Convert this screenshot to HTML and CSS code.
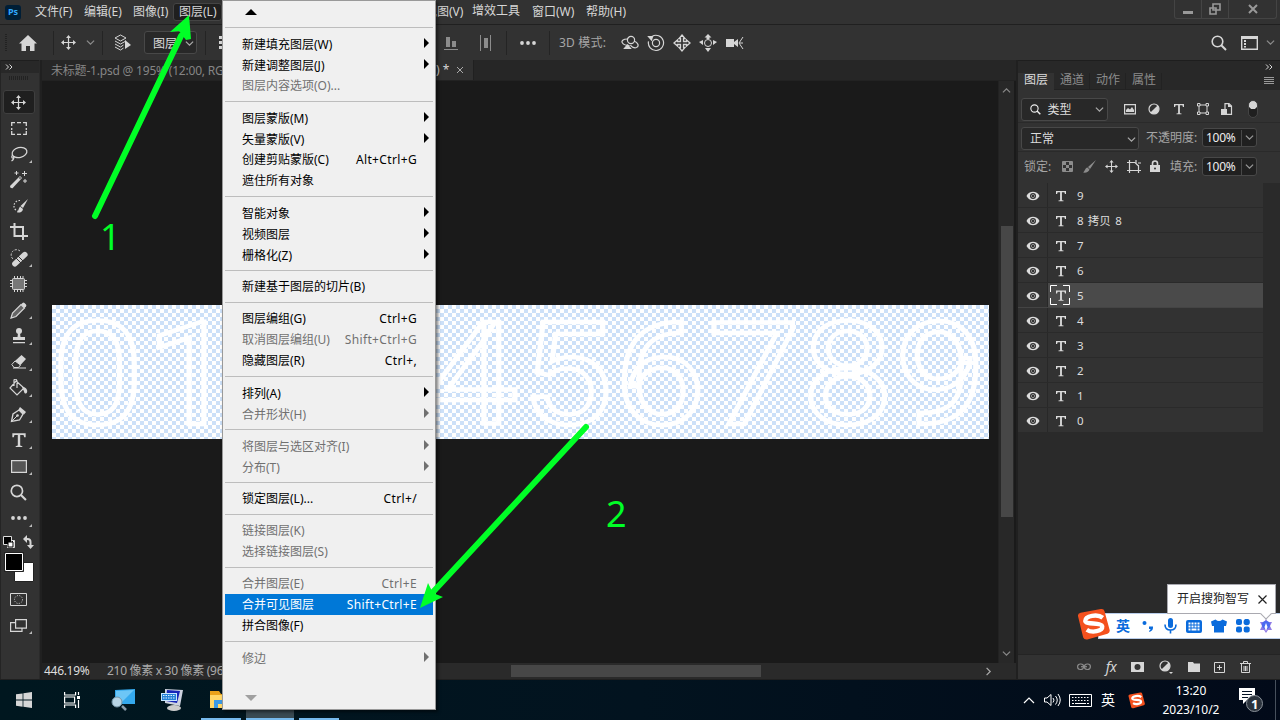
FILE: index.html
```html
<!DOCTYPE html>
<html lang="zh-CN">
	<head>
		<meta charset="UTF-8">
		<title>Photoshop</title>
		<link rel="stylesheet" href="styles.css">
	</head>
	<body>
		<svg class="defs" width="0" height="0">
			<symbol id="move" viewBox="0 0 16 16"><path d="M8 2v12M2 8h12" fill="none" stroke="currentColor" stroke-width="1.3"/><path d="M8 0l2.600 3.200H5.400zM8 16l2.600-3.200H5.400zM0 8l3.200-2.600v5.200zM16 8l-3.200-2.600v5.200z"/></symbol>
			<symbol id="down" viewBox="0 0 8 8"><path d="M.8 2.300l3.200 3.200 3.200-3.200" fill="none" stroke="currentColor" stroke-width="1.100"/></symbol>
			<symbol id="type" viewBox="0 0 12 12"><path d="M1 1h10v3H9.900L9.400 2.300H6.900v7.900l1.600.4V11.300H3.500v-.7l1.600-.4V2.300H2.600L2.100 4H1z"/></symbol>
			<symbol id="search" viewBox="0 0 16 16"><circle cx="6.500" cy="6.500" r="5.300" fill="none" stroke="currentColor" stroke-width="1.600"/><path d="M10.300 10.300L15 15" stroke="currentColor" stroke-width="2"/></symbol>
			<symbol id="eye" viewBox="0 0 14 10"><path d="M.5 5C3-.6 11-.6 13.500 5 11 10.600 3 10.600.5 5z"/><circle cx="7" cy="5" r="3" fill="#323232"/><circle cx="7" cy="5" r="1.700"/><circle cx="7" cy="5" r="1.200" fill="#323232"/></symbol>
			<symbol id="half" viewBox="0 0 12 12"><circle cx="6" cy="6" r="5" fill="none" stroke="currentColor" stroke-width="1.200"/><path d="M9.600 2.400A5.100 5.100 0 0 1 2.400 9.600z"/></symbol>
			<symbol id="more" viewBox="0 0 16 4"><circle cx="2" cy="2" r="1.900"/><circle cx="8" cy="2" r="1.900"/><circle cx="14" cy="2" r="1.900"/></symbol>
			<symbol id="sogou" viewBox="0 0 32 32"><path d="M1 8Q.500 5 3.500 4.500L23 1q3-.6 3.600 2l5 18q.7 3-2 4L10 30.500q-3 .5-4-2z" fill="#f4511e"/><path d="M25 9.500C20 5.500 8 7.500 8 12.500c.5 4 16 1 16.500 5.500.4 4.500-10 6.500-15 3" fill="none" stroke="#fff" stroke-width="4.200"/></symbol>
		</svg>

		<div class="app">
			<div class="menubar">
				<span class="logo">Ps</span>
				<span class="item">文件(F)</span>
				<span class="item">编辑(E)</span>
				<span class="item">图像(I)</span>
				<span class="item open">图层(L)</span>
				<span class="item view">视图(V)</span>
				<span class="item raised">增效工具</span>
				<span class="item">窗口(W)</span>
				<span class="item">帮助(H)</span>
				<div class="win">
					<span><svg width="12" height="14"><path d="M1 9h10v3H1z"/></svg></span>
					<span><svg width="14" height="14" fill="none" stroke="currentColor" stroke-width="1.600"><path d="M5 2h7v6H5zM2 6h6v6H2z"/></svg></span>
					<span class="close"><svg width="12" height="14" fill="none" stroke="currentColor" stroke-width="2"><path d="M2 3l8 8M10 3l-8 8"/></svg></span>
				</div>
			</div>

			<div class="options">
				<i class="grip"></i>
				<svg class="home" width="18" height="16"><path d="M9 0l9 8.500h-2.500V16h-4.500v-5H7v5H2.500V8.500H0z"/></svg>
				<i class="line"></i>
				<svg class="o-move" width="15" height="15"><use href="#move"/></svg>
				<svg class="dim" width="9" height="9"><use href="#down"/></svg>
				<i class="line"></i>
				<svg class="stack" width="18" height="18" fill="none" stroke="currentColor"><path d="M1 4l5.500-3L12 4 6.500 7zM1 7l5.500 3L12 7M1 10l5.500 3 3-2M1 13l5.500 3 3-2"/><path d="M11 6v9l6-4z" fill="currentColor" stroke="none"/></svg>
				<div class="select pick"><span>图层</span><svg width="9" height="9"><use href="#down"/></svg></div>
				<i class="line"></i>
				<svg class="dots" width="4" height="15"><path d="M1 1h3v3H1zM1 6h3v3H1zM1 11h3v3H1z"/></svg>
				<svg class="alignb" width="14" height="14"><path d="M2 1h4v10H2zM8 5h4v6H8zM0 13h14v1H0z"/></svg>
				<svg class="aligned" width="12" height="18"><path d="M0 1h1v16H0zM10 1h1v16h-1zM4 4h4v10H4z"/></svg>
				<i class="line"></i>
				<svg class="more" width="16" height="4"><use href="#more"/></svg>
				<i class="line"></i>
				<span class="mode">3D 模式:</span>
				<div class="modes">
					<svg width="18" height="16" fill="none" stroke="currentColor" stroke-width="1.200"><circle cx="10" cy="5" r="3.600"/><path d="M6.500 4C2 4 0 6 1.500 8c1 1.600 4 2.500 7 2.500M13 6c4 1.500 5.500 5 2.500 6.500-2 .8-5-.3-6-2.500"/><path d="M3.500 13.500l3-3.500 3 3.500z" fill="currentColor"/></svg>
					<svg width="18" height="18" fill="none" stroke="currentColor" stroke-width="1.200"><circle cx="9" cy="9" r="3.600"/><path d="M5 2.400a7.600 7.600 0 1 1-3.500 5"/><path d="M1.500 2.500h4l-1 3.500z" fill="currentColor"/></svg>
					<svg width="18" height="18" viewBox="-1 -1 18 18"><path d="M8 0l3 3.500H9.500v3h3V5L16 8l-3.500 3V9.500h-3v3H11L8 16l-3-3.500h1.500v-3h-3V11L0 8l3.500-3v1.500h3v-3H5z" fill="none" stroke="currentColor" stroke-width="1.300"/></svg>
					<svg width="18" height="18"><circle cx="9" cy="9" r="3.500" fill="none" stroke="currentColor"/><path d="M9 0l3.500 3.500h-2V5h-3V3.500h-2zM9 18l3-4H6zM0 8l4-2v5zM18 8l-4-2v5z"/></svg>
					<svg width="20" height="16"><path d="M1 4h8v8H1zM9 7l4-3v8l-4-3z"/><path d="M18 2l-4 6 4 6M15 8h3" fill="none" stroke="currentColor"/></svg>
				</div>
				<div class="right">
					<svg width="16" height="16"><use href="#search"/></svg>
					<svg width="17" height="14"><path d="M.7.700h15.600v12.600H.7z" fill="none" stroke="currentColor" stroke-width="1.400"/><path d="M0 0h17v3H0zM3 4h2v2H3zM3 7h2v2H3zM3 10h2v1.500H3z"/></svg>
					<svg class="dim" width="9" height="9"><use href="#down"/></svg>
				</div>
			</div>

			<div class="work">
				<div class="tools">
					<div class="strip"><svg width="8" height="6" fill="none" stroke="currentColor"><path d="M1 .5l2.500 2.500L1 5.500M4.500.5L7 3 4.500 5.500"/></svg></div>
					<div class="hgrip"></div>
					<div class="tool on"><svg width="15" height="15"><use href="#move"/></svg></div>
					<div class="tool"><svg width="16" height="13" fill="none" stroke="currentColor" stroke-width="1.300"><path d="M.7 4V.7H4M6 .7h4M12 .7h3.300V4M15.300 6v2M15.300 9v3.300H12M10 12.300H6M4 12.300H.7V9M.7 6v2"/></svg></div>
					<div class="tool sub"><svg width="18" height="17" fill="none" stroke="currentColor" stroke-width="1.300"><ellipse cx="9.500" cy="6.500" rx="7.500" ry="5" transform="rotate(-14 9.500 6.500)"/><path d="M3 9c-2 1-1.500 3.500 1 3M4 10c0 3-.5 4-2.500 5"/></svg></div>
					<div class="tool"><svg width="19" height="18"><path d="M1 15L11 5l2 2L3.500 17.200Q1 17.500 1 15z" /><path d="M10 7l1-1 1 1-1 1z" fill="#323232"/><path d="M7.500 0v4M5.500 2h4M15.500 0v5M13 2.500h5M16 8v4M14 10h4" stroke="currentColor"/></svg></div>
					<div class="tool"><svg width="20" height="17"><path d="M11 2.500a5.500 5.500 0 1 0-1 11" fill="none" stroke="currentColor" stroke-width="1.200" stroke-dasharray="1.500 1.500"/><path d="M19 1l-5 9-2.500-2zM11 8.500l3 2.500c-.5 3-3 4-6 3.500 1.500-1 1-3 3-6z"/></svg></div>
					<div class="tool"><svg width="18" height="18" fill="none" stroke="currentColor" stroke-width="2"><path d="M0 4h13v9M4.500 0v13H18M13 13v4"/></svg></div>
					<div class="tool sub"><svg width="18" height="18"><path d="M10 2a5 5 0 1 0-7 8" fill="none" stroke="currentColor" stroke-dasharray="2 1.500"/><rect x="0" y="8" width="19" height="5.500" rx="2.700" transform="rotate(-43 9 10)"/><path d="M8 7l5 5M6 9l5 5" stroke="#323232"/></svg></div>
					<div class="tool"><svg width="17" height="16"><rect x="2.500" y="2.500" width="12" height="11" rx="1" fill="#777" stroke="currentColor"/><path d="M4.500 0v2M7.500 0v2M10.500 0v2M13 0v2M4.500 14v2M7.500 14v2M10.500 14v2M13 14v2M0 4.500h2M0 7.500h2M0 10.500h2M15 4.500h2M15 7.500h2M15 10.500h2" stroke="currentColor"/></svg></div>
					<div class="tool sub"><svg width="17" height="17"><path d="M1 16l1.500-5L11 2.500l3.500 3.500L6 14.500z" fill="#666" stroke="currentColor" stroke-width="1.200"/><path d="M11 2.500l1.500-1.500q1-.8 2 0l1.500 1.500q.8 1 0 2L14.500 6z"/></svg></div>
					<div class="tool sub"><svg width="14" height="16"><circle cx="7" cy="3" r="3"/><path d="M6 5h2l.5 4H13v3H1V9h4.500zM1 14h12v1.300H1z"/></svg></div>
					<div class="tool sub"><svg width="16" height="14"><path d="M10.500 0l4.500 4-5.500 6-5.500-4z"/><path d="M4 6L.8 9.500 3 12.500h4.500l2-2.500z" fill="none" stroke="currentColor"/><path d="M2 12.500h13v1H2z"/></svg></div>
					<div class="tool sub"><svg width="19" height="18"><path d="M7 2l8 7-7 7-7-7zM5 7V1q2-2 3 1v7" fill="none" stroke="currentColor" stroke-width="1.200"/><path d="M13 8c4 0 6 3 5 5.500-.7 2-3 1-3-1z"/></svg></div>
					<div class="tool sub"><svg width="17" height="17"><path d="M1.500 15.500L3 8l6-4 4 4-3.500 6z" fill="none" stroke="currentColor" stroke-width="1.300"/><path d="M1.500 15.500L7 10" stroke="currentColor"/><path d="M10 1l6 5-2 2.500L8.500 3.500z"/><circle cx="7.500" cy="9.500" r="1.300"/></svg></div>
					<div class="tool sub"><svg width="16" height="16"><use href="#type"/></svg></div>
					<div class="tool sub"><svg width="16" height="13"><path d="M.6.6h14.800v11.800H.6z" fill="#555" stroke="currentColor" stroke-width="1.200"/></svg></div>
					<div class="tool"><svg width="17" height="17"><use href="#search"/></svg></div>
					<div class="tool sub"><svg width="16" height="4"><use href="#more"/></svg></div>
					<svg class="swatches" width="36" height="50"><path d="M7.500 9.500h7v7h-7z" fill="#fff" stroke="#ddd"/><path d="M9 10h4v4H9z" fill="#111"/><path d="M3.500 5.500h8v8h-8z" fill="#000" stroke="#ddd"/><path d="M8 11h5v5H8z" fill="#fff" stroke="#000"/><path d="M25 8h2.500q3 0 3 3v3" fill="none" stroke="currentColor" stroke-width="2"/><path d="M23 8l4-4v8zM27 14h7l-3.500 4z"/><path d="M14.500 31.500h19v19h-19z" fill="#fff" stroke="#222"/><path d="M4.500 21.500h19v19h-19z" fill="#000" stroke="#222"/><path d="M5.500 22.500h17v17h-17z" fill="#000" stroke="#fff"/></svg>
					<div class="tool mask"><svg width="17" height="13" fill="none" stroke="currentColor"><path d="M.5.5h16v12H.5z"/><circle cx="8.500" cy="6.500" r="4" stroke-dasharray="1 1.400"/></svg></div>
					<div class="tool sub"><svg width="17" height="13" fill="none" stroke="currentColor" stroke-width="1.200"><path d="M5.600.6h10.800v8.500H5.600zM5 3.600H.6v8.800H12V9.500"/></svg></div>
				</div>

				<div class="doc">
					<div class="tabs">
						<span class="tab old">未标题-1.psd @ 195% (12:00, RG</span>
						<span class="tab cur">) * <svg width="8" height="8"><path d="M1 1l6 6M7 1L1 7" stroke="#aaa"/></svg></span>
					</div>
					<div class="stage">
						<div class="paper"><b>0</b><b>1</b><b></b><b></b><b>4</b><b>5</b><b>6</b><b>7</b><b>8</b><b>9</b></div>
						<div class="vbar">
							<svg width="9" height="9" transform="rotate(180)"><use href="#down"/></svg>
							<i></i>
							<svg width="9" height="9"><use href="#down"/></svg>
						</div>
					</div>
					<div class="status">
						<span class="zoom">446.19%</span>
						<span class="size">210 像素 x 30 像素 (96</span>
						<i></i>
						<svg width="9" height="9" transform="rotate(-90)"><use href="#down"/></svg>
					</div>
				</div>

				<div class="panel">
					<div class="strip"><svg width="8" height="6" fill="none" stroke="currentColor"><path d="M1 .5l2.500 2.500L1 5.500M4.500.5L7 3 4.500 5.500"/></svg></div>
					<div class="ptabs">
						<span class="sel">图层</span><span>通道</span><span>动作</span><span>属性</span>
						<svg width="10" height="8" stroke="#999"><path d="M0 .5h10M0 2.500h10M0 4.500h10M0 6.500h10"/></svg>
					</div>
					<div class="prow filter">
						<div class="select kind"><svg width="11" height="11"><use href="#search"/></svg><span>类型</span><svg width="9" height="9"><use href="#down"/></svg></div>
						<div class="filters">
							<svg width="12" height="11"><path d="M.6.6h10.800v9.300H.6z" fill="none" stroke="currentColor" stroke-width="1.200"/><path d="M2 8V6l2-2 2 1.500L8 3l2 3v2z"/></svg>
							<svg width="12" height="12"><use href="#half"/></svg>
							<svg width="12" height="12"><use href="#type"/></svg>
							<svg width="12" height="12"><path d="M2 2h8v8H2z" fill="none" stroke="currentColor"/><path d="M.5.5h2.500v2.500H.5zM9 .5h2.500v2.500H9zM.5 9h2.500v2.500H.5zM9 9h2.500v2.500H9z" fill="#323232" stroke="currentColor"/></svg>
							<svg width="12" height="13"><path d="M4 6V.6h4L10.500 3v8.400H6" fill="none" stroke="currentColor" stroke-width="1.200"/><path d="M0 6h6v6H0zM7 0v4h4z"/></svg>
						</div>
						<i class="toggle"></i>
					</div>
					<div class="prow mix">
						<div class="select blend"><span>正常</span><svg width="9" height="9"><use href="#down"/></svg></div>
						<span class="lab op">不透明度:</span>
						<div class="num"><span>100%</span><svg width="9" height="9"><use href="#down"/></svg></div>
					</div>
					<div class="prow lock">
						<span class="lab">锁定:</span>
						<div class="locks">
							<svg class="dim" width="12" height="12"><path d="M.5.5h10v10H.5z" fill="none" stroke="currentColor"/><path d="M1 1h3v3H1zM7 1h3v3H7zM4 4h3v3H4zM1 7h3v3H1zM7 7h3v3H7z"/></svg>
							<svg class="dim" width="13" height="13"><path d="M13 0L7 9 5 7zM4.500 7.500L6.500 9.500C6 12 3 13 0 12.500 2 11.500 2 8 4.500 7.500z"/></svg>
							<svg width="13" height="13"><use href="#move"/></svg>
							<svg width="14" height="13" fill="none" stroke="currentColor" stroke-width="1.200"><path d="M2.500 0v13M0 2.500h8M11.500 5v8M0 10.500h14M8 2.500L11.500 6M9 0v3M11 3h3"/></svg>
							<svg width="10" height="13"><path d="M2.500 5V3.500a2.500 2.500 0 0 1 5 0V5" fill="none" stroke="currentColor" stroke-width="1.600"/><path d="M0 5h10v7H0z"/><circle cx="5" cy="8.500" r="1" fill="#323232"/></svg>
						</div>
						<span class="lab fillin">填充:</span>
						<div class="num"><span>100%</span><svg width="9" height="9"><use href="#down"/></svg></div>
					</div>
					<ul class="layers">
						<li><svg class="eye"><use href="#eye"/></svg><span class="t"><svg><use href="#type"/></svg></span>9</li>
						<li class="copy"><svg class="eye"><use href="#eye"/></svg><span class="t"><svg><use href="#type"/></svg></span>8 拷贝 8</li>
						<li><svg class="eye"><use href="#eye"/></svg><span class="t"><svg><use href="#type"/></svg></span>7</li>
						<li><svg class="eye"><use href="#eye"/></svg><span class="t"><svg><use href="#type"/></svg></span>6</li>
						<li class="active"><svg class="eye"><use href="#eye"/></svg><span class="t"><svg class="frame" fill="none" stroke="#fff" viewBox="0 0 20 20"><path d="M.5 7V.5H7M13 .5h6.500V7M19.500 13v6.500H13M7 19.500H.5V13"/><use href="#type" x="5" y="4.500" width="12" height="12" fill="#ddd" stroke="none"/></svg></span>5</li>
						<li><svg class="eye"><use href="#eye"/></svg><span class="t"><svg><use href="#type"/></svg></span>4</li>
						<li><svg class="eye"><use href="#eye"/></svg><span class="t"><svg><use href="#type"/></svg></span>3</li>
						<li><svg class="eye"><use href="#eye"/></svg><span class="t"><svg><use href="#type"/></svg></span>2</li>
						<li><svg class="eye"><use href="#eye"/></svg><span class="t"><svg><use href="#type"/></svg></span>1</li>
						<li><svg class="eye"><use href="#eye"/></svg><span class="t"><svg><use href="#type"/></svg></span>0</li>
					</ul>
					<div class="pfoot">
						<svg class="dim" width="14" height="8" fill="none" stroke="currentColor" stroke-width="1.200"><rect x=".6" y="1" width="6" height="5.500" rx="2.700"/><rect x="7.400" y="1" width="6" height="5.500" rx="2.700"/><path d="M4 3.700h6"/></svg>
						<span class="fx">fx</span>
						<svg width="13" height="11"><path d="M0 0h13v10H0z"/><circle cx="6.500" cy="5" r="3" fill="#323232"/></svg>
						<svg width="14" height="14"><use href="#half" width="12" height="12"/><path d="M10 12h4l-2 2z"/></svg>
						<svg width="12" height="10"><path d="M0 0h5l1 1.500h6V10H0z"/></svg>
						<svg width="11" height="11" fill="none" stroke="currentColor"><path d="M.5.5h10v10H.5zM5.500 3v5M3 5.500h5"/></svg>
						<svg width="11" height="12" fill="none" stroke="currentColor"><path d="M0 2.500h11M3.500 2V.5h4V2M1.500 3v8.500h8V3M4 5v5M5.500 5v5M7 5v5"/></svg>
					</div>
				</div>
			</div>

			<div class="taskbar">
				<svg class="start" width="16" height="16" fill="#fff"><path d="M0 2.300L6.600 1.400v6.200H0zM7.400 1.300L16 0v7.600H7.400zM0 8.400h6.600v6.300L0 13.700zM7.400 8.400H16V16l-8.600-1.200z"/></svg>
				<svg class="view-ic" width="16" height="16" fill="none" stroke="#fff" stroke-width="1.200"><path d="M.6 0v3h11V0M.6 5h10v6H.6zM.6 16v-3h11v3M14.500 0v3M14.500 8v8"/><path d="M13 4h3v3h-3z" fill="#fff" stroke="none"/></svg>
				<svg class="remote" width="25" height="24"><path d="M4 2l20-1v15H4z" fill="#35a9ed"/><path d="M5 3l18-1-13 13H5z" fill="#6dc6f6"/><path d="M11 18l4 4" stroke="#8b9dab" stroke-width="2.500"/><circle cx="6" cy="14" r="5" fill="#b8d5e5" stroke="#7494a6"/></svg>
				<svg class="pc" width="25" height="24"><ellipse cx="14" cy="20" rx="7" ry="3" fill="#ccc"/><path d="M5 1l18 1-3 16-15-3z" fill="#cdd2df"/><path d="M7 2l13 1-3 12-11-2z" fill="#1726b8"/><path d="M1 5h16v8H1z" fill="#c8e6ff"/><path d="M2 6h14v6H2z" fill="#2582d8"/><path d="M3 7.500h12M3 10h12" stroke="#e1f2ff" stroke-dasharray="1.500 1"/></svg>
				<svg class="folder" width="24" height="20"><path d="M0 1h9l2 3h13v14H0z" fill="#e9a21b"/><path d="M0 5h24v13H0z" fill="#ffd768"/><path d="M4 18v-8h16v8h-4v-4H8v4z" fill="#3a99e5"/></svg>
				<div class="runs"><i></i><i class="here"></i><i></i></div>
				<div class="tray">
					<svg width="12" height="8" fill="none" stroke="#fff" stroke-width="1.200"><path d="M1 7l5-5 5 5"/></svg>
					<svg width="17" height="14" fill="none" stroke="#fff"><path d="M.5 5h2.500l4-3.500v11L3 9H.5zM9 5q2 2 0 4.500M11.500 3q3.500 4 0 8.500M14 1q4.500 6 0 12"/></svg>
					<svg width="23" height="13" fill="none" stroke="#fff"><path d="M.5.5h22v12H.5z"/><path d="M3 3.500h17M3 6.500h17" stroke-dasharray="1.500 1.500"/><path d="M3 9.500h2M6 9.500h11M18 9.500h2"/></svg>
					<span class="ime">英</span>
					<svg width="17" height="17"><use href="#sogou"/></svg>
				</div>
				<div class="clock">13:20<br>2023/10/2</div>
				<svg class="note" width="26" height="26"><path d="M0 1h16v12H8l-4 4v-4H0z" fill="#fff"/><path d="M3 4.500h10M3 7.500h10M3 10.500h6" stroke="#051326"/><circle cx="15.500" cy="16.500" r="8" fill="#2b333d" stroke="#8b929a"/><text x="12" y="21.500" fill="#fff" font-size="13" font-weight="bold">1</text></svg>
				<i class="desk"></i>
			</div>

			<div class="popup">
				<div class="up"><svg width="12" height="6"><path d="M0 6l6-6 6 6z"/></svg></div>
				<hr>
				<div class="row more-r">新建填充图层(W)</div>
				<div class="row more-r">新建调整图层(J)</div>
				<div class="row off">图层内容选项(O)...</div>
				<hr>
				<div class="row more-r">图层蒙版(M)</div>
				<div class="row more-r">矢量蒙版(V)</div>
				<div class="row">创建剪贴蒙版(C)<kbd>Alt+Ctrl+G</kbd></div>
				<div class="row">遮住所有对象</div>
				<hr>
				<div class="row more-r">智能对象</div>
				<div class="row more-r">视频图层</div>
				<div class="row more-r">栅格化(Z)</div>
				<hr>
				<div class="row">新建基于图层的切片(B)</div>
				<hr>
				<div class="row">图层编组(G)<kbd>Ctrl+G</kbd></div>
				<div class="row off">取消图层编组(U)<kbd>Shift+Ctrl+G</kbd></div>
				<div class="row">隐藏图层(R)<kbd>Ctrl+,</kbd></div>
				<hr>
				<div class="row more-r">排列(A)</div>
				<div class="row off more-r">合并形状(H)</div>
				<hr>
				<div class="row off more-r">将图层与选区对齐(I)</div>
				<div class="row off more-r">分布(T)</div>
				<hr>
				<div class="row">锁定图层(L)...<kbd>Ctrl+/</kbd></div>
				<hr>
				<div class="row off">链接图层(K)</div>
				<div class="row off">选择链接图层(S)</div>
				<hr>
				<div class="row off">合并图层(E)<kbd>Ctrl+E</kbd></div>
				<div class="row hot">合并可见图层<kbd>Shift+Ctrl+E</kbd></div>
				<div class="row">拼合图像(F)</div>
				<hr>
				<div class="row off more-r">修边</div>
				<div class="dn"><svg width="12" height="6"><path d="M0 0h12L6 6z" fill="#a0a0a0"/></svg></div>
			</div>

			<div class="sogou">
				<svg class="s-logo" width="33" height="33"><use href="#sogou"/></svg>
				<div class="s-bar">
					<b>英</b>
					<svg width="14" height="14"><circle cx="3.500" cy="4" r="2"/><path d="M8 7.500h4q.5 4-3.500 5.500L8 12q1.500-.8 1.500-2H8z"/></svg>
					<svg width="13" height="16"><rect x="4" y="0" width="5" height="10" rx="2.500"/><path d="M1 6.500q0 5.500 5.500 5.500T12 6.500M6.500 12v3.500" fill="none" stroke="currentColor" stroke-width="1.600"/></svg>
					<svg width="16" height="13"><rect width="16" height="13" rx="2"/><path d="M2.500 3.500h11M2.500 6.500h11" stroke="#fff" stroke-width="2" stroke-dasharray="2 1"/><path d="M2.500 9.500h2M5.500 9.500h5M11.500 9.500h2" stroke="#fff" stroke-width="2"/></svg>
					<svg width="16" height="14"><path d="M0 2.500L4.500.5Q8 3.500 11.500.5L16 2.500l-1 4.500h-2v6.500H3V7H1z"/></svg>
					<svg width="14" height="14"><rect width="6" height="6" rx="2"/><circle cx="10.700" cy="3" r="3.200"/><rect y="7.500" width="6" height="6" rx="2"/><rect x="7.700" y="7.500" width="6" height="6" rx="2"/></svg>
					<svg class="magic" width="14" height="16"><path d="M7 1l2 3h4l-2 4 2 4H9l-2 3-2-3H1l2-4-2-4h4z" fill="#8f7be6"/><circle cx="7" cy="7" r="4" fill="#4a6af0"/><path d="M7 5l1.500 4L7 13 5.500 9z" fill="#fff"/></svg>
				</div>
				<div class="s-tip">开启搜狗智写<svg width="9" height="9"><path d="M.5.5l8 8M8.500.5l-8 8" stroke="#222" stroke-width="1.200"/></svg></div>
			</div>

			<svg class="marks" width="1280" height="720">
				<path d="M95 216L181 36M586 427L433 592" stroke="#00ff26" stroke-width="6" stroke-linecap="round"/>
				<path d="M189 15l-19 17 9-1 7 9 5-1zM420 608l8-25 5 10 10 4z" />
				<text x="100" y="250">1</text>
				<text x="606" y="527">2</text>
			</svg>
		</div>
	</body>
</html>
```
FILE: styles.css
```css
*{
	box-sizing: border-box;
	margin: 0;
	padding: 0;
}
body{
	width: 1280px;
	height: 720px;
	overflow: hidden;
	background: #323232;
	color: #d6d6d6;
	font: 12px/16px "Noto Sans", "Noto Sans CJK SC", sans-serif;
	white-space: nowrap;
}
svg{
	display: block;
	flex: none;
	fill: currentColor;
}
svg[fill="none"]{
	fill: none;
}
.defs{
	position: absolute;
}
i{
	flex: none;
}
.app{
	position: relative;
	display: flex;
	flex-direction: column;
	width: 1280px;
	height: 720px;
	overflow: hidden;
}
.dim{
	color: #8c8c8c;
}

/* menu bar */
.menubar{
	display: flex;
	align-items: center;
	height: 25px;
	padding-left: 5px;
	border-bottom: 1px solid #202020;
}
.logo{
	width: 16px;
	height: 15px;
	margin-right: 8px;
	border-radius: 3px;
	background: #001e36;
	color: #31a8ff;
	font-size: 9px;
	font-weight: bold;
	line-height: 14px;
	text-align: center;
}
.item{
	width: 49px;
	padding: 0 6px;
	font-size: 12px;
}
.open{
	margin-left: -3px;
	height: 18px;
	padding: 0 5px;
	border: 1px solid #444;
	border-radius: 3px;
	background: #1f1f1f;
}
.view{
	margin-left: 197px;
}
.raised{
	width: 60px;
	padding-bottom: 2px;
	margin-left: -2px;
}
.raised + .item{
	width: 54px;
}
.win{
	display: flex;
	align-self: flex-start;
	height: 19px;
	margin-left: auto;
	margin-right: 3px;
	border: 1px solid #444;
	border-top: 0;
	border-radius: 0 0 3px 3px;
	color: #999;
}
.win span{
	display: flex;
	justify-content: center;
	align-items: center;
	width: 27px;
	border-right: 1px solid #444;
}
.win .close{
	width: 47px;
	border: 0;
}

/* options bar */
.options{
	display: flex;
	align-items: center;
	height: 35px;
}
.grip{
	width: 2px;
	height: 18px;
	margin: 0 12px 0 5px;
	background: repeating-linear-gradient(#222 0 1px, transparent 1px 2px);
}
.line{
	width: 1px;
	height: 24px;
	background: #242424;
}
.home{
	margin-right: 16px;
}
.o-move{
	margin: 0 10px 0 7px;
}
.o-move + .dim{
	margin-right: 7px;
}
.stack{
	margin: 0 12px 0 11px;
}
.select{
	display: flex;
	align-items: center;
	justify-content: space-between;
	height: 23px;
	border: 1px solid #484848;
	border-radius: 3px;
	background: #282828;
	color: #ddd;
}
.select svg{
	color: #aaa;
}
.pick{
	width: 53px;
	padding: 2px 2px 0 8px;
	margin-right: 8px;
}
.dots{
	margin-left: 12px;
}
.alignb{
	margin-left: 222px;
	color: #8c8c8c;
}
.aligned{
	margin: 0 14px 0 22px;
	color: #8c8c8c;
}
.more{
	margin: 0 13px;
}
.mode{
	margin-left: 9px;
	color: #a6a6a6;
	letter-spacing: .2px;
}
.modes{
	display: flex;
	align-items: center;
	gap: 8px;
	margin-left: 15px;
}
.right{
	display: flex;
	align-items: center;
	gap: 14px;
	margin-left: auto;
	padding-right: 5px;
}
.right .dim{
	margin: 0 0 0 -6px;
}

/* tools */
.work{
	display: flex;
	height: 620px;
	background: #202020;
}
.strip{
	display: flex;
	align-items: center;
	height: 13px;
	padding-left: 4px;
	border-top: 1px solid #1e1e1e;
	background: #282828;
}
.tools{
	width: 40px;
	height: 619px;
	background: #323232;
	border-left: 1px solid #242424;
	border-right: 1px solid #2a2a2a;
}
.hgrip{
	width: 20px;
	height: 4px;
	margin: 3px 8px 10px;
	background: repeating-linear-gradient(90deg, #222 0 1px, transparent 1px 2px);
}
.tool{
	display: flex;
	align-items: center;
	justify-content: center;
	position: relative;
	width: 35px;
	height: 26px;
}
.tool.on{
	width: 32px;
	height: 24px;
	margin: 1px 2px;
	border: 1px solid #3f3f3f;
	border-radius: 3px;
	background: #1f1f1f;
}
.on svg{
	margin-right: 2px;
}
.sub::after{
	content: "";
	position: absolute;
	right: 4px;
	bottom: 4px;
	border-left: 3px solid transparent;
	border-bottom: 3px solid #bbb;
}
.swatches{
	width: 36px;
	height: 52px;
	margin-left: -1px;
	overflow: visible;
}
.mask{
	margin-top: 3px;
}

/* document */
.doc{
	width: 974px;
	height: 619px;
	margin-left: 2px;
	display: flex;
	flex-direction: column;
}
.tabs{
	display: flex;
	justify-content: space-between;
	height: 21px;
	padding-right: 542px;
	background: #262626;
	border-bottom: 1px solid #222;
}
.tab{
	line-height: 22px;
}
.old{
	padding-left: 9px;
	color: #858585;
	letter-spacing: -.2px;
}
.cur{
	display: flex;
	align-items: center;
	gap: 7px;
	width: 38px;
	background: #303030;
	border-right: 1px solid #202020;
}
.stage{
	display: flex;
	align-items: flex-start;
	height: 582px;
	background: #1a1a1a;
}
.paper{
	display: flex;
	justify-content: space-between;
	width: 937px;
	height: 134px;
	margin: 224px 9px 0 10px;
	background: repeating-conic-gradient(#cce0f8 0 25%, #fff 0 50%) 0 0 / 8px 8px;
}
.paper b{
	width: 93.500px;
	color: transparent;
	font: 400 142px/134px Roboto, sans-serif;
	text-align: center;
	transform: translate(-1px, 4px) scaleX(1.150);
	-webkit-text-stroke: 4.500px #fff;
}
.vbar{
	display: flex;
	flex-direction: column;
	align-items: center;
	width: 16px;
	height: 582px;
	padding: 5px 0;
	background: #282828;
	border-left: 1px solid #222;
	color: #888;
}
.vbar i{
	width: 12px;
	height: 291px;
	margin: 131px 0 auto;
	background: #474747;
}
.status{
	display: flex;
	align-items: center;
	height: 16px;
	background: #2a2a2a;
	color: #aaa;
}
.zoom{
	width: 48px;
	padding-left: 2px;
	background: #222;
	color: #ddd;
	letter-spacing: -.3px;
}
.size{
	width: 116px;
	margin-left: 17px;
	letter-spacing: -.3px;
}
.status i{
	width: 250px;
	height: 12px;
	margin: 0 223px 0 288px;
	background: #474747;
}

/* layers panel */
.panel{
	display: flex;
	flex-direction: column;
	width: 262px;
	height: 619px;
	margin-left: 2px;
	background: #2a2a2a;
}
.panel .strip{
	justify-content: flex-end;
	padding-right: 7px;
}
.ptabs{
	display: flex;
	height: 17px;
	background: #282828;
	color: #8c8c8c;
	line-height: 13px;
}
.ptabs span{
	width: 36px;
	padding-left: 6px;
	border-right: 1px solid #222;
	border-bottom: 1px solid #222;
}
.ptabs .sel{
	border: 0;
	background: #323232;
	color: #ddd;
}
.ptabs svg{
	margin: 4px 6px 0 auto;
}
.prow{
	display: flex;
	align-items: center;
	flex: none;
	height: 29px;
	padding-left: 3px;
	background: #323232;
	border-bottom: 1px solid #2a2a2a;
}
.filter{
	height: 33px;
	padding-top: 6px;
}
.mix{
	padding-top: 3px;
}
.lock{
	height: 31px;
	padding: 0 0 2px 6px;
	border: 0;
}
.kind{
	width: 87px;
	padding: 1px 3px 0 8px;
}
.kind span{
	margin-right: 17px;
}
.kind svg:first-child{
	color: #eee;
}
.filters{
	display: flex;
	align-items: center;
	gap: 12.300px;
	margin-left: 16px;
}
.toggle{
	width: 10px;
	height: 18px;
	margin-left: 15px;
	border: 1px solid #444;
	border-radius: 5px;
	background: radial-gradient(circle at 4px 4px, #d5d5d5 4px, #1f1f1f 4.500px);
}
.blend{
	width: 118px;
	padding: 1px 2px 0 8px;
}
.lab{
	color: #a5a5a5;
}
.op{
	width: 53px;
	margin: 0 3px 1px 7px;
}
.num{
	display: flex;
	align-items: center;
	width: 55px;
	height: 19px;
	margin-bottom: 2px;
	border: 1px solid #484848;
	border-radius: 3px;
	background: #202020;
	color: #eee;
	letter-spacing: -.3px;
}
.num span{
	width: 39px;
	padding-left: 3px;
	border-right: 1px solid #484848;
}
.num svg{
	margin-left: 3px;
	color: #999;
}
.locks{
	display: flex;
	align-items: center;
	gap: 9px;
	width: 100px;
	margin-left: 7px;
}
.fillin{
	width: 30px;
	margin: 0 2px 0 8px;
}
.lock .lab:first-child{
	width: 31px;
}
.lock .num{
	margin-bottom: 0;
}
.layers{
	width: 245px;
	list-style: none;
	background: #323232;
}
.layers li{
	display: flex;
	align-items: center;
	height: 25px;
	padding-top: 2px;
	border-bottom: 1px solid #2a2a2a;
	color: #ddd;
	font-size: 11.500px;
}
.layers .copy{
	word-spacing: 1.300px;
}
.eye{
	width: 14px;
	height: 10px;
	margin: 0 7px 0 8px;
}
.t{
	display: flex;
	align-items: center;
	align-self: stretch;
	width: 30px;
	margin-top: -2px;
	padding: 2px 0 0 7px;
	border-left: 1px solid #282828;
}
.t svg{
	width: 12px;
	height: 12px;
}
.layers .active{
	background: linear-gradient(90deg, #323232 30px, #4a4a4a 30px);
	border-bottom-color: #444;
}
.active .t{
	padding: 0 0 0 2px;
}
.t .frame{
	width: 20px;
	height: 20px;
}
.pfoot{
	display: flex;
	align-items: center;
	justify-content: space-between;
	height: 25px;
	margin-top: auto;
	padding: 0 29px 0 59px;
	background: #323232;
	border-top: 1px solid #242424;
}
.fx{
	font: italic 14px/14px "Noto Sans", sans-serif;
}

/* windows taskbar */
.taskbar{
	display: flex;
	align-items: center;
	height: 40px;
	padding-left: 16px;
	background: linear-gradient(90deg, #00171f, #02131f 50%, #020a19);
}
.view-ic{
	margin-left: 32px;
}
.remote{
	margin-left: 31px;
}
.pc{
	margin-left: 24px;
}
.folder{
	margin-left: 25px;
}
.runs{
	display: flex;
	align-self: flex-end;
	align-items: flex-end;
	gap: 5px;
	height: 40px;
	margin-left: -33px;
}
.runs i{
	width: 40px;
	height: 2px;
	background: #76b9ed;
}
.runs .here{
	width: 48px;
	height: 40px;
	background: linear-gradient(#394a53 38px, #76b9ed 38px);
}
.tray{
	display: flex;
	align-items: center;
	gap: 9px;
	margin-left: auto;
}
.tray svg:nth-child(3){
	margin-left: -1px;
}
.ime{
	width: 15px;
	color: #fff;
	font-size: 14px;
}
.tray svg:last-child{
	margin-left: 3px;
}
.clock{
	width: 62px;
	margin: 0 17px 0 15px;
	color: #fff;
	font-size: 12px;
	line-height: 19px;
	text-align: center;
}
.note{
	margin-right: 10px;
}
.desk{
	width: 1px;
	height: 40px;
	margin-right: 4px;
	background: #47505c;
}

/* opened layer menu */
.popup{
	position: absolute;
	left: 222px;
	top: 0;
	width: 214px;
	height: 710px;
	padding: 0 2px;
	border: 1px solid #999;
	background: #f0f0f0;
	box-shadow: 2px 2px 3px rgba(0, 0, 0, .5);
	color: #000;
}
.up{
	height: 21px;
	padding: 8px 0 0 20px;
}
hr{
	height: 1px;
	margin: 5px 0;
	border: 0;
	background: #bdbdbd;
}
.row{
	display: flex;
	align-items: center;
	height: 21px;
	padding: 1px 16px 0 17px;
}
.row kbd{
	margin-left: auto;
	font: inherit;
	letter-spacing: .35px;
}
.more-r{
	padding: 2px 4px 0 17px;
}
.more-r::after{
	content: "";
	margin: -4px 0 0 auto;
	border: 5px solid transparent;
	border-left-color: currentColor;
	border-right: 0;
}
.off{
	color: #707070;
}
.hot{
	background: #0078d7;
	color: #fff;
}
.dn{
	padding: 27px 0 0 20px;
}

/* input method bar */
.sogou{
	position: absolute;
	left: 1078px;
	top: 584px;
	width: 202px;
	height: 56px;
	color: #0a6bdc;
}
.s-bar{
	display: flex;
	align-items: center;
	gap: 9px;
	height: 26px;
	margin: 29px 0 0 20px;
	padding-left: 17px;
	background: #fff;
	border: 1px solid #b9cdea;
	border-right: 0;
}
.s-bar b{
	width: 16px;
	font-size: 14px;
}
.s-logo{
	position: absolute;
	left: -1px;
	top: 24px;
}
.s-tip{
	position: absolute;
	right: 4px;
	top: 0;
	display: flex;
	align-items: center;
	justify-content: space-between;
	width: 109px;
	height: 30px;
	padding: 0 8px 0 9px;
	border: 1px solid #a9a9b0;
	background: #fff;
	color: #222;
}
.s-tip::after{
	content: "";
	position: absolute;
	right: 5px;
	top: 25px;
	width: 7px;
	height: 7px;
	border: 1px solid #a9a9b0;
	border-top: 0;
	border-left: 0;
	background: #fff;
	transform: rotate(45deg);
}

/* green step arrows over everything */
.marks{
	position: absolute;
	left: 0;
	top: 0;
	fill: #00ff26;
	font-size: 36px;
}
```
